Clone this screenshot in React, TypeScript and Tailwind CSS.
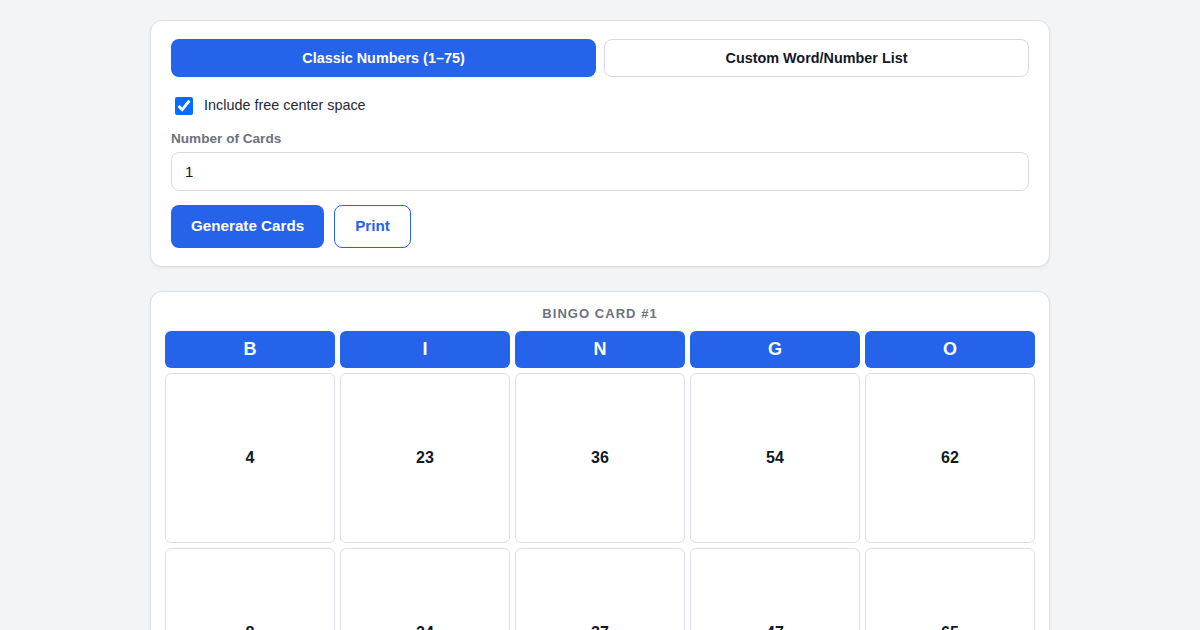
import { useState } from 'react';

const LETTERS = ['B', 'I', 'N', 'G', 'O'];
const ROWS = [
  [4, 23, 36, 54, 62],
  [8, 24, 37, 47, 65],
  [12, 19, 'FREE', 49, 70],
  [1, 28, 41, 58, 66],
  [14, 17, 33, 51, 74],
];

export default function App() {
  const [mode, setMode] = useState<'classic' | 'custom'>('classic');
  const [free, setFree] = useState(true);
  const [count, setCount] = useState('1');

  return (
    <div className="min-h-screen bg-[#f3f4f6] pt-5 pb-10 font-['Liberation_Sans',Arial,sans-serif] text-[#111827]">
      <div className="mx-auto w-[900px] space-y-6">
        <div className="rounded-xl border border-[#dcdfe4] bg-white px-5 pt-[18px] pb-[18px] shadow-[0_1px_3px_rgba(0,0,0,0.06)]">
          <div className="grid grid-cols-2 gap-2">
            <button
              onClick={() => setMode('classic')}
              className={mode === 'classic'
                ? 'h-[38px] rounded-lg bg-[#2563eb] pt-px text-[14.4px] font-bold text-white'
                : 'h-[38px] rounded-lg border border-[#d8dbe0] bg-white pt-px text-[14.4px] font-bold text-[#111827]'}
            >
              Classic Numbers (1–75)
            </button>
            <button
              onClick={() => setMode('custom')}
              className={mode === 'custom'
                ? 'h-[38px] rounded-lg bg-[#2563eb] pt-px text-[14.4px] font-bold text-white'
                : 'h-[38px] rounded-lg border border-[#d8dbe0] bg-white pt-px text-[14.4px] font-bold text-[#111827]'}
            >
              Custom Word/Number List
            </button>
          </div>

          <label className="mt-[19px] flex h-5 items-center gap-[11px] pl-1 text-[14.4px] text-[#1f2937]">
            <input
              type="checkbox"
              checked={free}
              onChange={e => setFree(e.target.checked)}
              className="-mt-px h-[18px] w-[18px] accent-[#0b6bff]"
            />
            Include free center space
          </label>

          <div className="mt-[13px] text-[13.6px] leading-5 font-bold text-[#6b7280]">Number of Cards</div>
          <input
            value={count}
            onChange={e => setCount(e.target.value)}
            className="mt-[3px] block h-[39px] w-full rounded-lg border border-[#d8dbe0] px-[13px] text-[15px] text-[#111827] outline-none"
          />

          <div className="mt-[14px] flex gap-[10px]">
            <button className="h-[43px] rounded-lg bg-[#2563eb] px-5 text-[15.2px] font-bold text-white">Generate Cards</button>
            <button className="h-[43px] rounded-lg border border-[#2563eb] bg-white px-5 text-[15.2px] font-bold text-[#2563eb]">Print</button>
          </div>
        </div>

        <div className="rounded-xl border border-[#dcdfe4] bg-white px-[14px] pt-[14px] pb-[14px] shadow-[0_1px_3px_rgba(0,0,0,0.06)]">
          <div className="mb-[9px] text-center text-[13px] leading-4 font-bold tracking-[0.08em] text-[#6b7280]">BINGO CARD #1</div>
          <div className="grid grid-cols-5 gap-[5px]">
            {LETTERS.map(l => (
              <div key={l} className="flex h-[37px] items-center justify-center rounded-md bg-[#2563eb] text-[18px] font-bold text-white">
                {l}
              </div>
            ))}
            {ROWS.flat().map((n, i) => (
              <div key={i} className="flex h-[170px] items-center justify-center rounded-md border border-[#dcdfe4] bg-white text-[16px] font-bold text-[#111827]">
                {n}
              </div>
            ))}
          </div>
        </div>
      </div>
    </div>
  );
}
